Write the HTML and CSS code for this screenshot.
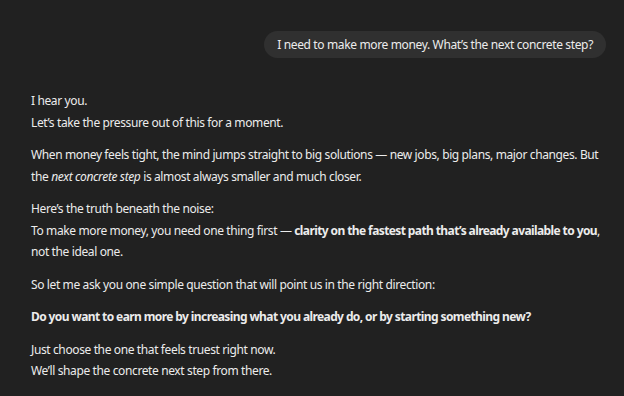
FILE: index.html
```html
<!DOCTYPE html>
<html lang="en">
<head>
<meta charset="utf-8">
<title>Chat</title>
<link rel="stylesheet" href="styles.css">
</head>
<body>
<main class="thread">
  <div class="user-row">
    <div class="bubble">I need to make more money. What’s the next concrete step?</div>
  </div>
  <div class="reply">
    <p>I hear you.<br>Let’s take the pressure out of this for a moment.</p>
    <p>When money feels tight, the mind jumps straight to big solutions — new jobs, big plans, major changes. But<br>the <em>next concrete step</em> is almost always smaller and much closer.</p>
    <p>Here’s the truth beneath the noise:<br>To make more money, you need one thing first — <strong>clarity on the fastest path that’s already available to you</strong>,<br>not the ideal one.</p>
    <p>So let me ask you one simple question that will point us in the right direction:</p>
    <p><strong>Do you want to earn more by increasing what you already do, or by starting something new?</strong></p>
    <p>Just choose the one that feels truest right now.<br>We’ll shape the concrete next step from there.</p>
  </div>
</main>
</body>
</html>
```

FILE: styles.css
```css
html, body {
  margin: 0;
  padding: 0;
  background: #212121;
}
body {
  width: 624px;
  height: 396px;
  overflow: hidden;
  color: #ececec;
  font-family: "Noto Sans", "Open Sans", sans-serif;
  font-size: 12px;
  letter-spacing: -0.38px;
}
.thread {
  padding: 31px 18px 0 31px;
}
.user-row {
  display: flex;
  justify-content: flex-end;
}
.bubble {
  background: #303030;
  border-radius: 14px;
  padding: 0 13px;
  height: 27px;
  line-height: 27px;
  white-space: nowrap;
  letter-spacing: -0.36px;
}
.reply {
  margin-top: 32px;
  line-height: 21.5px;
}
.reply p {
  margin: 0 0 11px 0;
  white-space: nowrap;
}
.reply .dash {
  letter-spacing: -1px;
}
.reply strong {
  font-weight: 700;
  letter-spacing: -0.6px;
}
```
